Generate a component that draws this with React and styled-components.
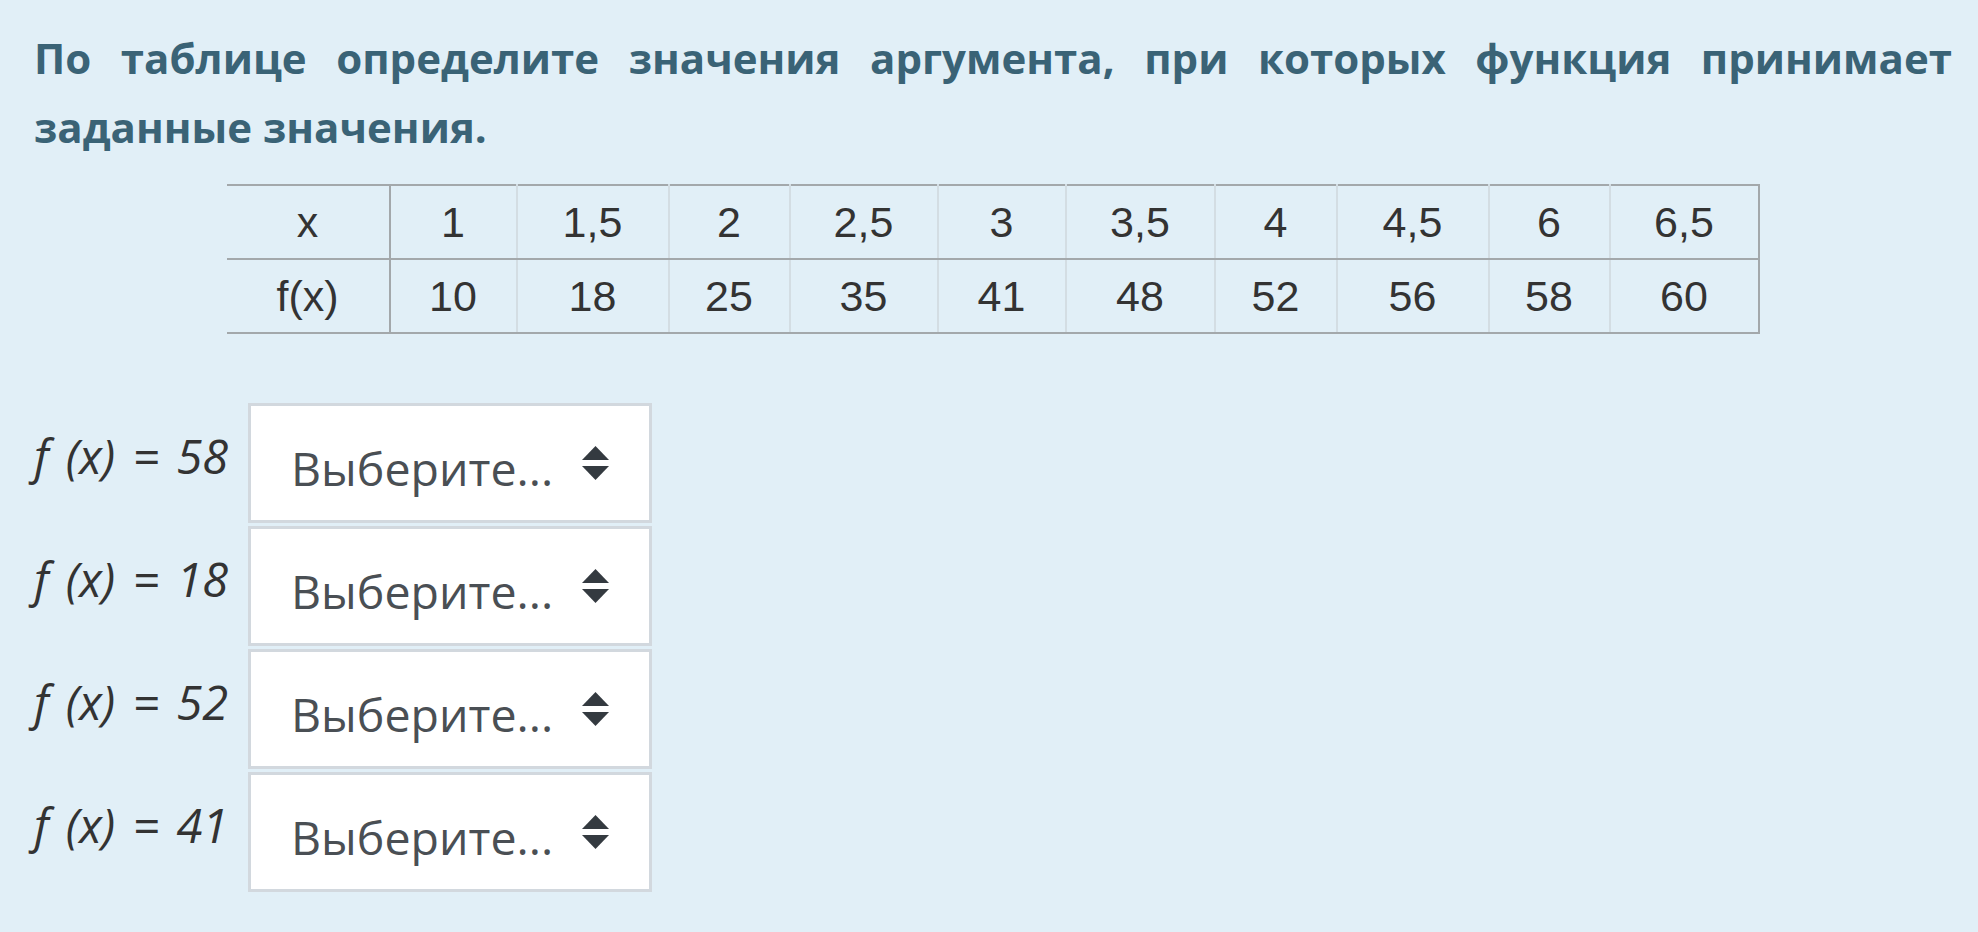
import React from "react";
import styled, { createGlobalStyle } from "styled-components";

const GlobalStyle = createGlobalStyle`
  body {
    margin: 0;
    background: #e1eff7;
  }
`;

const xs = ["1", "1,5", "2", "2,5", "3", "3,5", "4", "4,5", "6", "6,5"];
const fs = ["10", "18", "25", "35", "41", "48", "52", "56", "58", "60"];
const widths = [163, 127, 152, 121, 148, 128, 149, 122, 152, 121, 149];
const targets = ["58", "18", "52", "41"];

const Page = styled.div`
  padding: 23px 26px 40px 34px;
`;

const Question = styled.p`
  margin: 0;
  font-family: "Open Sans", sans-serif;
  font-weight: 700;
  font-size: 42px;
  line-height: 69px;
  color: #3a6376;
  text-align: justify;
`;

const ValuesTable = styled.table`
  margin: 23px auto 0;
  border-collapse: collapse;
  font-family: "Liberation Sans", Arial, sans-serif;
  font-size: 43px;
  color: #333;
`;

const Cell = styled.td`
  height: 72px;
  padding: 0;
  text-align: center;
  border-top: 2px solid #a3a8ab;
  border-bottom: 2px solid #a3a8ab;
  border-right: 2px solid ${(p) => (p.$strong ? "#a3a8ab" : "#d3dde3")};
`;

const Answers = styled.div`
  margin-top: 69px;
  display: flex;
  flex-direction: column;
  gap: 3px;
`;

const AnswerRow = styled.div`
  display: flex;
  align-items: center;
`;

const Label = styled.div`
  width: 214px;
  margin-top: -14px;
  font-family: "Open Sans", sans-serif;
  font-style: italic;
  font-size: 47px;
  color: #333;
  white-space: nowrap;
  word-spacing: 5px;
`;

const SelectBox = styled.div`
  width: 404px;
  height: 120px;
  box-sizing: border-box;
  border: 3px solid #d2d8de;
  background: #fff;
  display: flex;
  align-items: center;
  justify-content: space-between;
  padding: 10px 40px 0 40px;
  font-family: "Open Sans", sans-serif;
  font-size: 46.5px;
  color: #4a4f54;
`;

const Arrows = () => (
  <svg width="27" height="34" viewBox="0 0 27 34" style={{ marginTop: -10 }}>
    <polygon points="13.5,0 27,14 0,14" fill="#343a40" />
    <polygon points="0,20 27,20 13.5,34" fill="#343a40" />
  </svg>
);

export default function App() {
  return (
    <Page>
      <GlobalStyle />
      <Question>
        По таблице определите значения аргумента, при которых функция
        принимает заданные значения.
      </Question>

      <ValuesTable>
        <colgroup>
          {widths.map((w, i) => (
            <col key={i} style={{ width: w }} />
          ))}
        </colgroup>
        <tbody>
          <tr>
            <Cell $strong>x</Cell>
            {xs.map((v, i) => (
              <Cell key={v} $strong={i === xs.length - 1}>
                {v}
              </Cell>
            ))}
          </tr>
          <tr>
            <Cell $strong>f(x)</Cell>
            {fs.map((v, i) => (
              <Cell key={v} $strong={i === fs.length - 1}>
                {v}
              </Cell>
            ))}
          </tr>
        </tbody>
      </ValuesTable>

      <Answers>
        {targets.map((t) => (
          <AnswerRow key={t}>
            <Label>f (x) = {t}</Label>
            <SelectBox>
              <span>Выберите...</span>
              <Arrows />
            </SelectBox>
          </AnswerRow>
        ))}
      </Answers>
    </Page>
  );
}
